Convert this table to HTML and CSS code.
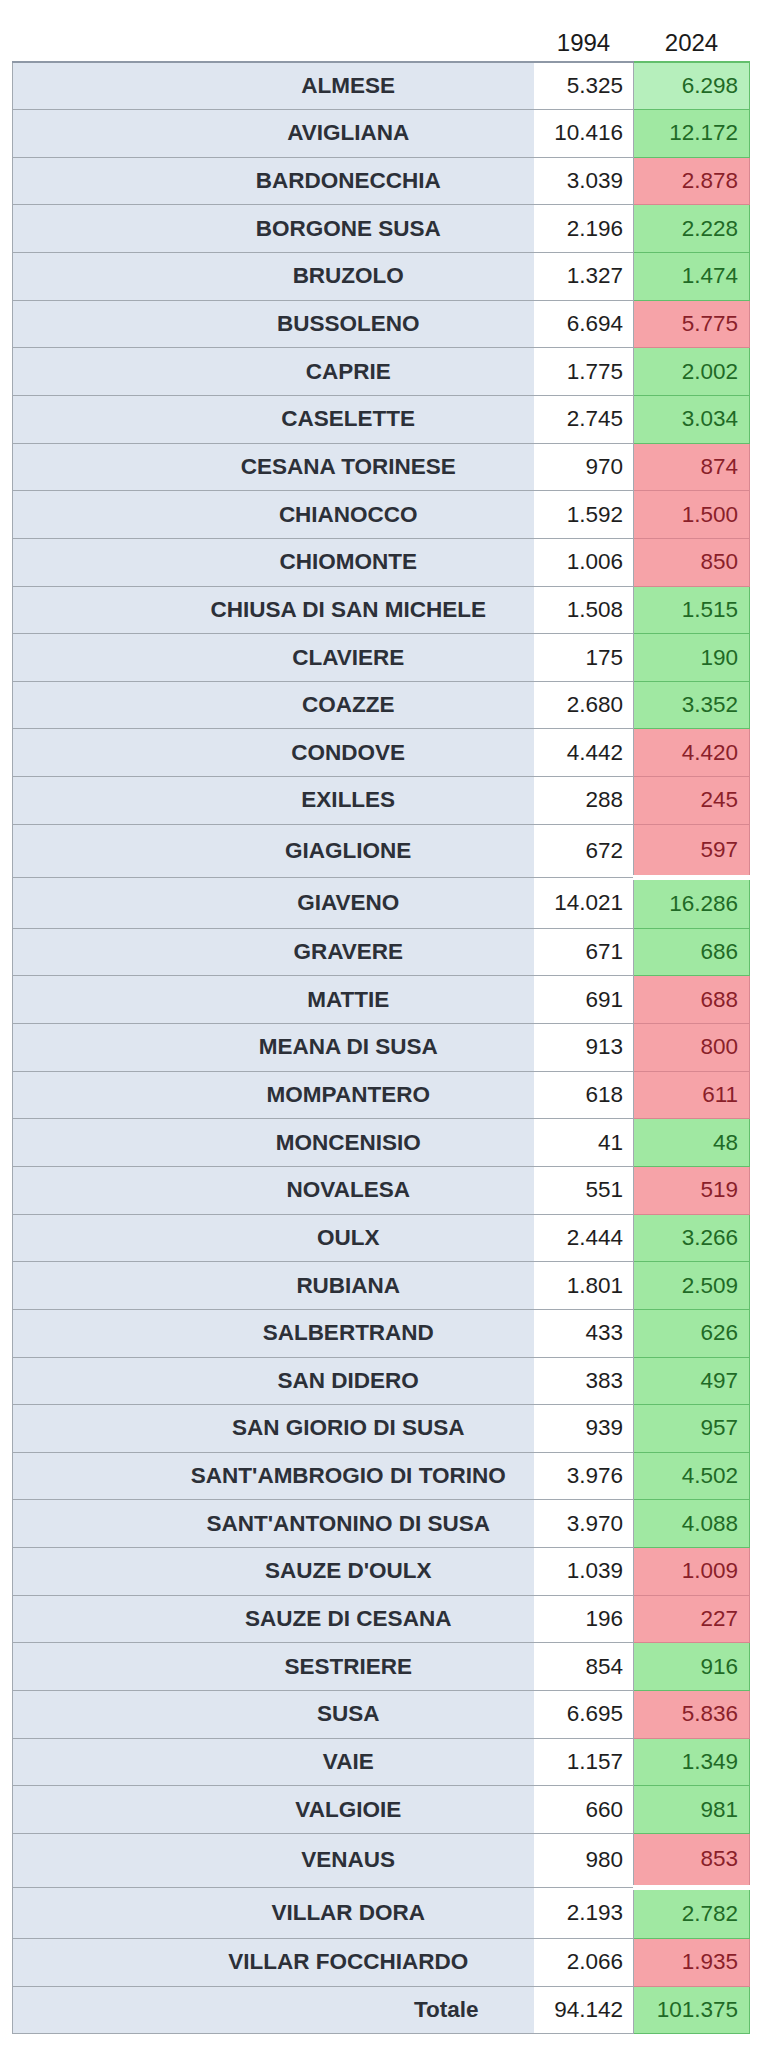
FILE: index.html
```html
<!DOCTYPE html>
<html lang="it">
<head>
<meta charset="utf-8">
<title>Popolazione 1994 - 2024</title>
<link rel="stylesheet" href="styles.css">
</head>
<body>
<table class="pop">
  <colgroup>
    <col class="c-name">
    <col class="c-old">
    <col class="c-new">
  </colgroup>
  <thead>
    <tr class="head">
      <th class="blank"></th>
      <th class="yr">1994</th>
      <th class="yr">2024</th>
    </tr>
  </thead>
  <tbody>
    <tr class="first"><td class="name">ALMESE</td><td class="old">5.325</td><td class="new up light">6.298</td></tr>
    <tr><td class="name">AVIGLIANA</td><td class="old">10.416</td><td class="new up">12.172</td></tr>
    <tr><td class="name">BARDONECCHIA</td><td class="old">3.039</td><td class="new down">2.878</td></tr>
    <tr><td class="name">BORGONE SUSA</td><td class="old">2.196</td><td class="new up">2.228</td></tr>
    <tr><td class="name">BRUZOLO</td><td class="old">1.327</td><td class="new up">1.474</td></tr>
    <tr><td class="name">BUSSOLENO</td><td class="old">6.694</td><td class="new down">5.775</td></tr>
    <tr><td class="name">CAPRIE</td><td class="old">1.775</td><td class="new up">2.002</td></tr>
    <tr><td class="name">CASELETTE</td><td class="old">2.745</td><td class="new up">3.034</td></tr>
    <tr><td class="name">CESANA TORINESE</td><td class="old">970</td><td class="new down">874</td></tr>
    <tr><td class="name">CHIANOCCO</td><td class="old">1.592</td><td class="new down">1.500</td></tr>
    <tr><td class="name">CHIOMONTE</td><td class="old">1.006</td><td class="new down">850</td></tr>
    <tr><td class="name">CHIUSA DI SAN MICHELE</td><td class="old">1.508</td><td class="new up">1.515</td></tr>
    <tr><td class="name">CLAVIERE</td><td class="old">175</td><td class="new up">190</td></tr>
    <tr><td class="name">COAZZE</td><td class="old">2.680</td><td class="new up">3.352</td></tr>
    <tr><td class="name">CONDOVE</td><td class="old">4.442</td><td class="new down">4.420</td></tr>
    <tr><td class="name">EXILLES</td><td class="old">288</td><td class="new down">245</td></tr>
    <tr class="tall"><td class="name">GIAGLIONE</td><td class="old">672</td><td class="new down">597</td></tr>
    <tr class="mid"><td class="name">GIAVENO</td><td class="old">14.021</td><td class="new up gap">16.286</td></tr>
    <tr><td class="name">GRAVERE</td><td class="old">671</td><td class="new up">686</td></tr>
    <tr><td class="name">MATTIE</td><td class="old">691</td><td class="new down">688</td></tr>
    <tr><td class="name">MEANA DI SUSA</td><td class="old">913</td><td class="new down">800</td></tr>
    <tr><td class="name">MOMPANTERO</td><td class="old">618</td><td class="new down">611</td></tr>
    <tr><td class="name">MONCENISIO</td><td class="old">41</td><td class="new up">48</td></tr>
    <tr><td class="name">NOVALESA</td><td class="old">551</td><td class="new down">519</td></tr>
    <tr><td class="name">OULX</td><td class="old">2.444</td><td class="new up">3.266</td></tr>
    <tr><td class="name">RUBIANA</td><td class="old">1.801</td><td class="new up">2.509</td></tr>
    <tr><td class="name">SALBERTRAND</td><td class="old">433</td><td class="new up">626</td></tr>
    <tr><td class="name">SAN DIDERO</td><td class="old">383</td><td class="new up">497</td></tr>
    <tr><td class="name">SAN GIORIO DI SUSA</td><td class="old">939</td><td class="new up">957</td></tr>
    <tr><td class="name">SANT'AMBROGIO DI TORINO</td><td class="old">3.976</td><td class="new up">4.502</td></tr>
    <tr><td class="name">SANT'ANTONINO DI SUSA</td><td class="old">3.970</td><td class="new up">4.088</td></tr>
    <tr><td class="name">SAUZE D'OULX</td><td class="old">1.039</td><td class="new down">1.009</td></tr>
    <tr><td class="name">SAUZE DI CESANA</td><td class="old">196</td><td class="new down">227</td></tr>
    <tr><td class="name">SESTRIERE</td><td class="old">854</td><td class="new up">916</td></tr>
    <tr><td class="name">SUSA</td><td class="old">6.695</td><td class="new down">5.836</td></tr>
    <tr><td class="name">VAIE</td><td class="old">1.157</td><td class="new up">1.349</td></tr>
    <tr><td class="name">VALGIOIE</td><td class="old">660</td><td class="new up">981</td></tr>
    <tr class="tall2"><td class="name">VENAUS</td><td class="old">980</td><td class="new down">853</td></tr>
    <tr class="mid"><td class="name">VILLAR DORA</td><td class="old">2.193</td><td class="new up gap">2.782</td></tr>
    <tr><td class="name">VILLAR FOCCHIARDO</td><td class="old">2.066</td><td class="new down">1.935</td></tr>
    <tr class="total"><td class="name tot">Totale</td><td class="old">94.142</td><td class="new up">101.375</td></tr>
  </tbody>
</table>
</body>
</html>
```
FILE: styles.css
```css
html, body {
  margin: 0;
  padding: 0;
  background: #ffffff;
}

body {
  padding: 0 0 0 12px;
  font-family: "Liberation Sans", Arial, sans-serif;
  color: #202122;
}

.pop {
  border-collapse: collapse;
  table-layout: fixed;
  width: 737px;
  font-size: 22.5px;
}

.c-name { width: 521px; }
.c-old { width: 100px; }
.c-new { width: 116px; }

.head th {
  height: 57px;
  padding: 0 0 4px 0;
  vertical-align: bottom;
  font-weight: normal;
  font-size: 24px;
  color: #1a1a1a;
  border: none;
}

.head .yr { text-align: center; }

tbody tr { height: 47.65px; }
tbody tr.tall { height: 53px; }
tbody tr.tall2 { height: 54px; }
tbody tr.mid { height: 51px; }

tbody td {
  padding: 0;
  border: 1px solid #a2a9b1;
  vertical-align: middle;
}

tbody tr.first td { border-top: 2px solid #8e98a6; }

.name {
  background: #dfe6f0;
  font-weight: bold;
  text-align: center;
  color: #2c3038;
  padding-left: 160px !important;
  padding-right: 10px !important;
  border-right: none !important;
}

.name.tot {
  text-align: right;
  padding-right: 55px !important;
}

.old {
  background: #ffffff;
  text-align: right;
  padding-right: 10px !important;
  border-left: none !important;
  color: #1e1e1e;
}

.new {
  text-align: right;
  padding-right: 11px !important;
}

.new.up {
  background: #a0e8a2;
  color: #1f6a26;
  border-color: #62bf6c;
}

.new.up.light {
  background: #b6efbc;
}

.new.down {
  background: #f6a3a8;
  color: #8a1f2a;
  border-color: #d88790;
}

.new.gap {
  border-top: 5px solid #ffffff;
}
```
